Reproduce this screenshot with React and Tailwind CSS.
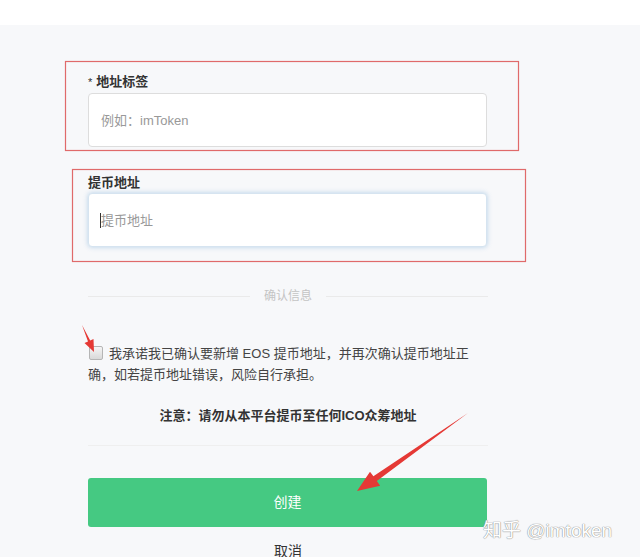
import React from 'react';

const font = { fontFamily: '"Liberation Sans", "Noto Sans CJK SC", sans-serif' };

// 标注层：红框和箭头
const Annotations = () => (
  <svg className="absolute inset-0 pointer-events-none" width="640" height="557" viewBox="0 0 640 557">
    <rect x="65.5" y="61.5" width="453" height="89" fill="none" stroke="#e06a6a" strokeWidth="1.2" />
    <rect x="72.5" y="169.5" width="453" height="92" fill="none" stroke="#e06a6a" strokeWidth="1.2" />
    <polygon points="82,325 90.2,340.5 93.5,339 94,352 84.5,343 88,341.5" fill="#e53935" />
    <polygon points="468,413 376.8,480.9 380.2,485.8 357,491 370,471.8 373.4,476.2" fill="#e53935" />
  </svg>
);

export default function App() {
  return (
    <div className="relative w-[640px] h-[557px] overflow-hidden bg-[#f7f8fa]" style={font}>
      {/* 顶部白条 */}
      <div className="h-[25px] bg-white" />

      <div className="ml-[88px] w-[400px] pt-[49px]">
        {/* 地址标签 */}
        <div className="h-[16px] mb-[3px] text-[13px] leading-[16px] font-bold text-[#333]">
          <span className="font-normal text-[11px] mr-[4px]">*</span>地址标签
        </div>
        <input
          className="block w-[399px] h-[54px] px-[12px] bg-white border border-[#ddd] rounded-[4px] text-[13px] outline-none placeholder:text-[#999]"
          placeholder="例如：imToken"
        />

        {/* 提币地址 */}
        <div className="mt-[28px] h-[16px] mb-[2px] text-[13px] leading-[16px] font-bold text-[#333]">提币地址</div>
        <div className="relative">
          <input
            className="block w-[399px] h-[54px] px-[12px] bg-white border border-[#d6e4f0] rounded-[4px] text-[13px] outline-none shadow-[0_0_5px_rgba(102,160,210,0.45)] placeholder:text-[#999]"
            placeholder="提币地址"
          />
          <span className="absolute left-[12px] top-[20px] w-[1px] h-[15px] bg-[#333]" />
        </div>

        {/* 确认信息 */}
        <div className="mt-[41px] flex items-center h-[16px]">
          <div className="flex-1 h-px bg-[#eaeaea]" />
          <span className="px-[14px] text-[12px] text-[#c4c4c4]">确认信息</span>
          <div className="flex-1 h-px bg-[#eaeaea]" />
        </div>

        <p className="mt-[39px] text-[13px] leading-[21px] text-[#444]">
          <span className="inline-block align-[-2px] w-[14px] h-[14px] ml-px mr-[6px] rounded-[2px] border border-[#b5b5b5] bg-gradient-to-b from-[#f5f5f5] to-[#d9d9d9]" />
          我承诺我已确认要新增 EOS 提币地址，并再次确认提币地址正确，如若提币地址错误，风险自行承担。
        </p>

        <p className="mt-[21px] text-center text-[13px] leading-[20px] font-bold text-[#333]">
          注意：请勿从本平台提币至任何ICO众筹地址
        </p>

        <div className="mt-[19px] h-px bg-[#efefef]" />

        <button className="mt-[32px] w-[399px] h-[49px] rounded-[3px] bg-[#45c982] text-white text-[14px]">
          创建
        </button>

        <div className="mt-[14px] text-center text-[14px] leading-[20px] text-[#333]">取消</div>
      </div>

      {/* 水印 */}
      <div
        className="absolute left-[483px] top-[518px] text-[19px] leading-[26px] text-white"
        style={{ textShadow: '0 0 1px #888, 0 0 1px #888' }}
      >
        知乎 @imtoken
      </div>

      <Annotations />
    </div>
  );
}
